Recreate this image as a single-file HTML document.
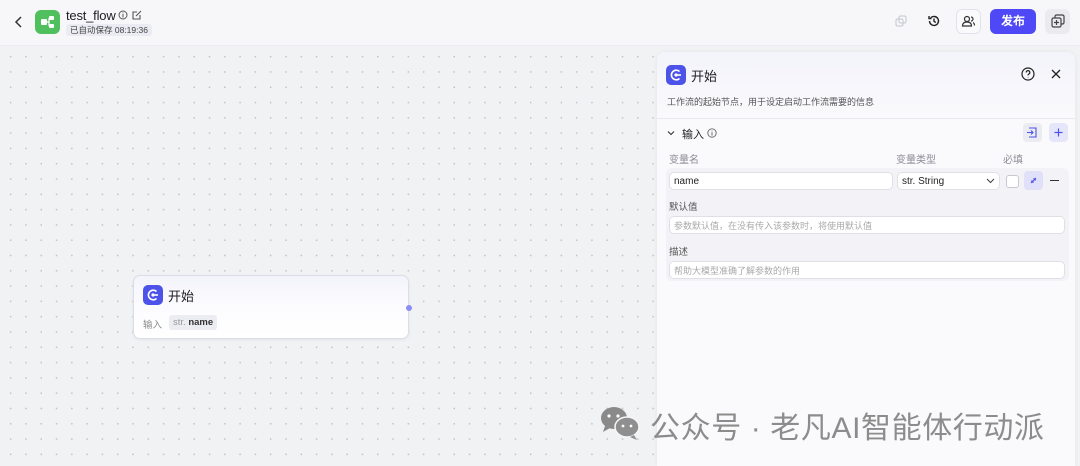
<!DOCTYPE html>
<html><head><meta charset="utf-8"><style>
*{box-sizing:border-box;margin:0;padding:0}
body{width:1080px;height:466px;overflow:hidden;position:relative;font-family:"Liberation Sans","Noto Sans CJK SC",sans-serif;background:#f2f3f5;color:#1d1d22}
.hdr{position:absolute;left:0;top:0;width:1080px;height:46px;background:#f7f7fa;border-bottom:1px solid #ececf2}
.canvas{position:absolute;left:0;top:46px;width:1080px;height:420px;background-color:#f1f2f4;background-image:radial-gradient(circle,#c0c3ca 0.8px,transparent 1px);background-size:15.3px 15.3px;background-position:3px 3px}
.abs{position:absolute}
.panel{position:absolute;left:657px;top:52px;width:418px;height:414px;background:#fafafc;border-radius:8px 8px 0 0;box-shadow:0 0 4px rgba(0,0,0,.06)}
.ic{width:20px;height:20px;border-radius:5px;background:#4d53e8;display:flex;align-items:center;justify-content:center}
.inp{position:absolute;background:#fff;border:1px solid #dfe0e6;border-radius:5px;font-size:10px;padding-left:4px;display:flex;align-items:center}
.lbl{position:absolute;font-size:10px;color:#8a8b95}
</style></head><body>
<div class="hdr">
 <svg class="abs" style="left:14px;top:15px" width="10" height="14" viewBox="0 0 10 14"><path d="M7 2L2 7l5 5" fill="none" stroke="#333" stroke-width="1.5"/></svg>
 <div class="abs" style="left:35px;top:10px;width:25px;height:24px;border-radius:6px;background:#4fc05d">
  <svg width="25" height="24" viewBox="0 0 25 24"><rect x="6" y="9" width="6" height="6" rx="1" fill="#fff"/><rect x="14" y="6" width="5" height="4" rx="1" fill="#fff"/><rect x="14" y="14" width="5" height="4" rx="1" fill="#fff"/><path d="M12 12h2M14 8v8" stroke="#fff" stroke-width="1.2"/></svg>
 </div>
 <div class="abs" style="left:66px;top:8px;font-size:13px;letter-spacing:-0.2px;color:#1d1d22">test_flow</div>
 <svg class="abs" style="left:118px;top:10px" width="10" height="10" viewBox="0 0 10 10"><circle cx="5" cy="5" r="4" fill="none" stroke="#555" stroke-width="1"/><path d="M5 4v3.5M5 2.5v.8" stroke="#555"/></svg>
 <svg class="abs" style="left:132px;top:10px" width="10" height="10" viewBox="0 0 10 10"><path d="M8 5v4H1V2h4M4 6l5-5" fill="none" stroke="#555" stroke-width="1.1"/></svg>
 <div class="abs" style="left:66px;top:24px;height:12px;padding:0 4px;background:#ebebf3;border-radius:3px;font-size:8.5px;line-height:12px;color:#444">已自动保存 08:19:36</div>
 <svg class="abs" style="left:895px;top:15px" width="12" height="12" viewBox="0 0 12 12"><rect x="1" y="4" width="7" height="7" rx="1.5" fill="none" stroke="#c4c6d0"/><rect x="4" y="1" width="7" height="7" rx="1.5" fill="none" stroke="#c4c6d0"/></svg>
 <svg class="abs" style="left:927px;top:14px" width="14" height="14" viewBox="0 0 14 14"><path d="M2.5 7a4.5 4.5 0 1 0 1.3-3.2M2 2v2.5h2.5" fill="none" stroke="#222" stroke-width="1.4"/><path d="M7 4.5V7.3l1.8 1.2" fill="none" stroke="#222" stroke-width="1.4"/></svg>
 <div class="abs" style="left:956px;top:9px;width:25px;height:25px;border:1px solid #e2e3ea;border-radius:6px;background:#fafafc">
  <svg width="23" height="23" viewBox="0 0 23 23"><circle cx="10" cy="9" r="2.5" fill="none" stroke="#333" stroke-width="1.2"/><path d="M5.5 16c0-3 2-4 4.5-4s4.5 1 4.5 4z" fill="none" stroke="#333" stroke-width="1.2"/><path d="M14 7a2 2 0 0 1 0 4M16 12.5c1 .5 1.5 1.5 1.5 3" fill="none" stroke="#333" stroke-width="1.2"/></svg>
 </div>
 <div class="abs" style="left:990px;top:9px;width:46px;height:25px;border-radius:6px;background:#4e48f6;color:#fff;font-size:12px;font-weight:bold;text-align:center;line-height:25px">发布</div>
 <div class="abs" style="left:1045px;top:9px;width:25px;height:25px;border-radius:6px;background:#eaeaef">
  <svg width="25" height="25" viewBox="0 0 25 25"><rect x="7" y="9" width="9" height="9" rx="1.5" fill="none" stroke="#444" stroke-width="1.2"/><path d="M10 9V7.5A1.5 1.5 0 0 1 11.5 6h6A1.5 1.5 0 0 1 19 7.5v6a1.5 1.5 0 0 1-1.5 1.5H16M11.5 11v5M9 13.5h5" fill="none" stroke="#444" stroke-width="1.2"/></svg>
 </div>
</div>
<div class="canvas"></div>

<!-- node -->
<div class="abs" style="left:133px;top:275px;width:276px;height:64px;background:linear-gradient(#f3f3fb,#fcfcff 50%,#fff);border:1px solid #dcdde6;border-radius:7px;box-shadow:0 1px 3px rgba(0,0,0,.06)">
 <div class="ic abs" style="left:9px;top:9px"><svg width="14" height="14" viewBox="0 0 14 14"><path d="M10.5 3.5A4.8 4.8 0 1 0 10.5 10.5" fill="none" stroke="#fff" stroke-width="1.6"/><circle cx="7" cy="7" r="1.6" fill="#fff"/><path d="M7 7h5" stroke="#fff" stroke-width="1.6"/></svg></div>
 <div class="abs" style="left:34px;top:10px;font-size:13px">开始</div>
 <div class="abs" style="left:9px;top:41px;font-size:9.5px;color:#888">输入</div>
 <div class="abs" style="left:35px;top:39px;height:15px;padding:0 4px;background:#ececf3;border-radius:3px;font-size:9.5px;line-height:15px"><span style="color:#999">str.</span> <b style="color:#333">name</b></div>
</div>
<div class="abs" style="left:406px;top:305px;width:6px;height:6px;border-radius:50%;background:#8b8ff5"></div>

<!-- panel -->
<div class="panel">
 <div class="abs" style="left:0;top:0;width:418px;height:67px;background:linear-gradient(#f3f3fb,#fafafc);border-radius:8px 8px 0 0;border-bottom:1px solid #e8e8ee"></div>
 <div class="ic abs" style="left:9px;top:13px"><svg width="14" height="14" viewBox="0 0 14 14"><path d="M10.5 3.5A4.8 4.8 0 1 0 10.5 10.5" fill="none" stroke="#fff" stroke-width="1.6"/><circle cx="7" cy="7" r="1.6" fill="#fff"/><path d="M7 7h5" stroke="#fff" stroke-width="1.6"/></svg></div>
 <div class="abs" style="left:34px;top:14px;font-size:13px">开始</div>
 <svg class="abs" style="left:364px;top:15px" width="14" height="14" viewBox="0 0 14 14"><circle cx="7" cy="7" r="6" fill="none" stroke="#222" stroke-width="1.2"/><path d="M5.2 5.5a1.8 1.8 0 1 1 2.5 1.6c-.5.3-.7.6-.7 1.3M7 10v.4" fill="none" stroke="#222" stroke-width="1.2"/></svg>
 <svg class="abs" style="left:394px;top:17px" width="10" height="10" viewBox="0 0 10 10"><path d="M1 1l8 8M9 1L1 9" stroke="#222" stroke-width="1.3"/></svg>
 <div class="abs" style="left:10px;top:43px;font-size:9px;color:#555">工作流的起始节点，用于设定启动工作流需要的信息</div>

 <svg class="abs" style="left:10px;top:77px" width="8" height="8" viewBox="0 0 8 8"><path d="M1 2.5l3 3 3-3" fill="none" stroke="#333" stroke-width="1.1"/></svg>
 <div class="abs" style="left:25px;top:74px;font-size:11px;color:#222">输入</div>
 <svg class="abs" style="left:50px;top:76px" width="10" height="10" viewBox="0 0 10 10"><circle cx="5" cy="5" r="4.2" fill="none" stroke="#666" stroke-width=".9"/><path d="M5 4.2v3.3M5 2.6v.8" stroke="#666"/></svg>
 <div class="abs" style="left:366px;top:71px;width:19px;height:19px;border-radius:4px;background:#ebebf2"><svg width="19" height="19" viewBox="0 0 19 19"><path d="M6 5h7v9H6M4 9.5h6M8 7.5l2 2-2 2" fill="none" stroke="#4d53e8" stroke-width="1.1"/></svg></div>
 <div class="abs" style="left:392px;top:71px;width:19px;height:19px;border-radius:4px;background:#e6e6fb"><svg width="19" height="19" viewBox="0 0 19 19"><path d="M9.5 5.5v8M5.5 9.5h8" stroke="#4d53e8" stroke-width="1.2"/></svg></div>

 <div class="lbl" style="left:12px;top:99px">变量名</div>
 <div class="lbl" style="left:239px;top:99px">变量类型</div>
 <div class="lbl" style="left:346px;top:99px">必填</div>

 <div class="abs" style="left:9px;top:116px;width:403px;height:113px;background:#f3f3f7;border-radius:6px"></div>
 <div class="inp" style="left:12px;top:120px;width:224px;height:18px;color:#222">name</div>
 <div class="inp" style="left:240px;top:120px;width:103px;height:18px;color:#222">str. String
  <svg style="position:absolute;right:4px;top:5px" width="9" height="6" viewBox="0 0 9 6"><path d="M1 1l3.5 3.5L8 1" fill="none" stroke="#444" stroke-width="1.1"/></svg></div>
 <div class="abs" style="left:349px;top:123px;width:13px;height:13px;border:1px solid #c8c9d2;border-radius:3px;background:#fff"></div>
 <div class="abs" style="left:367px;top:119px;width:19px;height:19px;border-radius:4px;background:#e0e0fa"><svg width="19" height="19" viewBox="0 0 19 19"><path d="M12 7l-2.5 2.5M7 12l2.5-2.5M10 7v2h2M7 10h2v2" fill="none" stroke="#4d53e8" stroke-width="1"/></svg></div>
 <div class="abs" style="left:393px;top:128px;width:9px;height:1.3px;background:#333"></div>

 <div class="abs" style="left:12px;top:147px;font-size:9.5px;color:#555">默认值</div>
 <div class="inp" style="left:12px;top:164px;width:396px;height:18px;color:#aaa;font-size:9px">参数默认值，在没有传入该参数时，将使用默认值</div>
 <div class="abs" style="left:12px;top:192px;font-size:9.5px;color:#555">描述</div>
 <div class="inp" style="left:12px;top:209px;width:396px;height:18px;color:#aaa;font-size:9px">帮助大模型准确了解参数的作用</div>
</div>

<!-- watermark -->
<svg class="abs" style="left:599px;top:405px" width="42" height="36" viewBox="0 0 42 36"><ellipse cx="15" cy="13" rx="13" ry="11" fill="#8a8a8a"/><path d="M6 21l-2 6 7-4z" fill="#8a8a8a"/><ellipse cx="28" cy="22" rx="12" ry="10" fill="#8f8f8f" stroke="#f7f7f9" stroke-width="1.5"/><path d="M35 30l3 5-7-3z" fill="#8f8f8f"/><circle cx="10" cy="11" r="1.6" fill="#fff"/><circle cx="19" cy="11" r="1.6" fill="#fff"/><circle cx="24" cy="21" r="1.4" fill="#fff"/><circle cx="32" cy="21" r="1.4" fill="#fff"/></svg>
<div class="abs" style="left:650px;top:403px;font-size:30px;color:#8c8c8c;letter-spacing:0.6px;white-space:nowrap">公众号 · 老凡AI智能体行动派</div>
</body></html>
